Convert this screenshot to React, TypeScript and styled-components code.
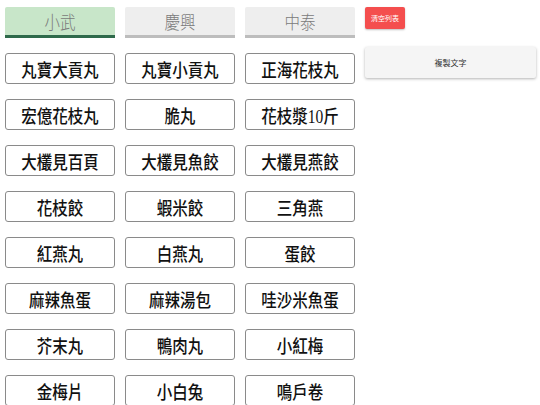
import React, { useState } from 'react';
import styled, { createGlobalStyle } from 'styled-components';

const stores = ['小武', '慶興', '中泰'];

const items = [
  '丸寶大貢丸', '丸寶小貢丸', '正海花枝丸',
  '宏億花枝丸', '脆丸', '花枝漿10斤',
  '大欉見百頁', '大欉見魚餃', '大欉見燕餃',
  '花枝餃', '蝦米餃', '三角燕',
  '紅燕丸', '白燕丸', '蛋餃',
  '麻辣魚蛋', '麻辣湯包', '哇沙米魚蛋',
  '芥末丸', '鴨肉丸', '小紅梅',
  '金梅片', '小白兔', '鳴戶卷',
];

const App = () => {
  const [active, setActive] = useState('小武');

  return (
    <>
      <GlobalStyle />
      <Page>
        <Board>
          {stores.map((name) => (
            <Tab key={name} $active={name === active} onClick={() => setActive(name)}>
              <Label>{name}</Label>
            </Tab>
          ))}
          {items.map((item) => (
            <Item key={item}>
              <Label>{item}</Label>
            </Item>
          ))}
        </Board>
        <Side>
          <ClearButton>清空列表</ClearButton>
          <CopyButton>複製文字</CopyButton>
        </Side>
      </Page>
    </>
  );
};

const GlobalStyle = createGlobalStyle`
  body {
    margin: 0;
    background: #fff;
    font-family: "Liberation Serif", "Noto Sans CJK TC", serif;
  }
`;

const Page = styled.div`
  display: flex;
  align-items: flex-start;
  gap: 10px;
  padding: 7px 4px 0 5px;
`;

const Board = styled.div`
  display: grid;
  grid-template-columns: repeat(3, 110px);
  grid-auto-rows: 31px;
  column-gap: 10px;
  row-gap: 15px;
`;

const Label = styled.span`
  display: inline-block;
  transform: scaleX(0.86);
`;

const Tab = styled.button<{ $active: boolean }>`
  height: 31px;
  padding: 0;
  border: none;
  border-radius: 2px 2px 0 0;
  border-bottom: 3px solid ${(p) => (p.$active ? '#2f6a4b' : '#bdbdbd')};
  background: ${(p) => (p.$active ? '#c8e6c9' : '#eeeeee')};
  color: #7a7a7a;
  font-family: inherit;
  font-size: 18px;
  font-weight: 300;
  cursor: pointer;
`;

const Item = styled.button`
  height: 31px;
  padding: 0;
  border: 1px solid #8a8a8a;
  border-radius: 3px;
  background: #fff;
  color: #111;
  font-family: inherit;
  font-size: 18px;
  font-weight: 500;
  cursor: pointer;
`;

const Side = styled.div`
  width: 171px;
  display: flex;
  flex-direction: column;
  align-items: flex-start;
  gap: 18px;
`;

const ClearButton = styled.button`
  width: 40px;
  height: 22px;
  padding: 0;
  border: none;
  border-radius: 2px;
  background: #f44e4e;
  color: #fff;
  font-family: "Noto Sans CJK TC", sans-serif;
  font-size: 7px;
  box-shadow: 0 1px 2px rgba(0, 0, 0, 0.25);
  cursor: pointer;
`;

const CopyButton = styled.button`
  width: 171px;
  height: 31px;
  padding: 0;
  border: none;
  border-radius: 2px;
  background: #f5f5f5;
  color: #333;
  font-family: "Noto Sans CJK TC", sans-serif;
  font-size: 8px;
  box-shadow: 0 1px 3px rgba(0, 0, 0, 0.3);
  cursor: pointer;
`;

export default App;
